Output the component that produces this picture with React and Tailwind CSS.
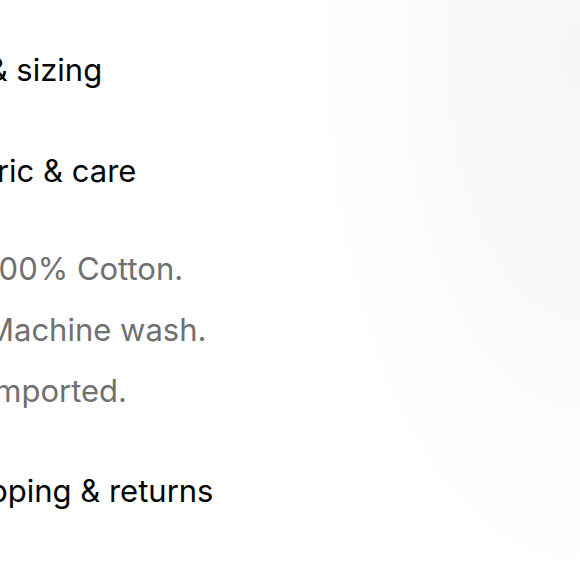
export default function App() {
  const details = ['100% Cotton.', 'Machine wash.', 'Imported.'];

  return (
    <div className="h-[580px] w-[580px] overflow-hidden bg-[radial-gradient(ellipse_45%_90%_at_100%_10%,#f6f6f6_0%,#f9f9f9_45%,#ffffff_100%)] font-['Inter','Liberation_Sans',sans-serif]">
      <div className="ml-[-57px] pt-[50px] text-[31px] leading-[40px]">
        <h3 className="text-[#050505] whitespace-nowrap">Fit &amp; sizing</h3>

        <h3 className="mt-[61px] text-[#050505] whitespace-nowrap">Fabric &amp; care</h3>

        <ul className="mt-[58px] ml-[43px] flex flex-col gap-[21px] text-[#707070]">
          {details.map((item) => (
            <li key={item} className="whitespace-nowrap">{item}</li>
          ))}
        </ul>

        <h3 className="mt-[60px] text-[#050505] whitespace-nowrap">Shipping &amp; returns</h3>
      </div>
    </div>
  );
}
